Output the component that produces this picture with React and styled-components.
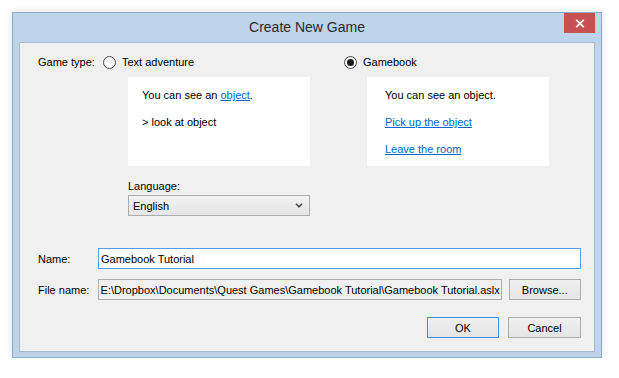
import React from "react";
import styled, { createGlobalStyle } from "styled-components";

const Global = createGlobalStyle`
  html, body { margin: 0; padding: 0; background: #ffffff; }
  body { font-family: "Liberation Sans", Arial, sans-serif; font-size: 11px; color: #000; }
  * { box-sizing: border-box; }
`;

const Page = styled.div`
  padding: 12px 0 0 12px;
`;

const Window = styled.div`
  width: 590px;
  height: 346px;
  border: 1px solid #8fabc7;
  background: #bdd4ea;
  display: flex;
  flex-direction: column;
  padding: 0 6px 5px 6px;
  box-shadow: 0 0 8px rgba(0, 0, 0, 0.12);
`;

const TitleBar = styled.div`
  height: 29px;
  display: grid;
  grid-template-columns: 1fr auto 1fr;
  align-items: start;
`;

const Title = styled.div`
  grid-column: 2;
  line-height: 29px;
  font-size: 14px;
  color: #2a2a2a;
`;

const CloseButton = styled.div`
  grid-column: 3;
  justify-self: end;
  width: 31px;
  height: 20px;
  background: #c75050;
  display: flex;
  align-items: center;
  justify-content: center;
`;

const Client = styled.div`
  flex: 1;
  border: 1px solid #a7b9cb;
  background: #f0f0f0;
  padding: 12px 13px 13px 18px;
  display: flex;
  flex-direction: column;
`;

const TopRow = styled.div`
  display: flex;
`;

const TypeLabel = styled.div`
  width: 65px;
  height: 14px;
  line-height: 14px;
`;

const OptionCol = styled.div`
  width: ${(p) => p.$width || "auto"};
  display: flex;
  flex-direction: column;
`;

const RadioRow = styled.div`
  display: flex;
  align-items: center;
  gap: 6px;
  height: 14px;
`;

const RadioCircle = styled.div`
  width: 13px;
  height: 13px;
  border-radius: 50%;
  border: 1px solid #4d4d4d;
  background: linear-gradient(#f4f4f4, #ffffff);
  display: flex;
  align-items: center;
  justify-content: center;
  &::after {
    content: "";
    display: ${(p) => (p.$checked ? "block" : "none")};
    width: 7px;
    height: 7px;
    border-radius: 50%;
    background: #1a1a1a;
  }
`;

const Preview = styled.div`
  margin-top: 8px;
  margin-left: ${(p) => p.$indent}px;
  width: 182px;
  height: 89px;
  background: #ffffff;
  padding: 11px ${(p) => p.$pad}px 0;
  display: flex;
  flex-direction: column;
  gap: 12px;
`;

const Line = styled.div`
  line-height: 15px;
  white-space: nowrap;
`;

const Link = styled.span`
  color: #0066cc;
  text-decoration: underline;
`;

const LanguageBlock = styled.div`
  margin-left: 25px;
  margin-top: 13px;
  display: flex;
  flex-direction: column;
  gap: 1px;
`;

const FieldLabel = styled.div`
  line-height: 15px;
`;

const Select = styled.div`
  width: 182px;
  height: 21px;
  border: 1px solid #acacac;
  background: linear-gradient(#f2f2f2, #e5e5e5);
  display: flex;
  align-items: center;
  justify-content: space-between;
  padding: 0 6px 0 4px;
`;

const FormRow = styled.div`
  display: flex;
  align-items: center;
  margin-top: ${(p) => p.$top}px;
`;

const Field = styled.div`
  height: 21px;
  width: ${(p) => (p.$width ? p.$width + "px" : "auto")};
  flex: ${(p) => (p.$width ? "none" : 1)};
  border: 1px solid ${(p) => (p.$focused ? "#569de5" : "#adadad")};
  background: ${(p) => (p.$readOnly ? "#f0f0f0" : "#ffffff")};
  padding: 0 2px;
  display: flex;
  align-items: center;
  white-space: nowrap;
  overflow: hidden;
`;

const Button = styled.div`
  width: ${(p) => p.$width}px;
  height: 21px;
  margin-left: ${(p) => p.$ml || 0}px;
  border: 1px solid ${(p) => (p.$default ? "#3c8fe0" : "#adadad")};
  background: linear-gradient(#f0f0f0, #e5e5e5);
  display: flex;
  align-items: center;
  justify-content: center;
`;

const ButtonRow = styled.div`
  display: flex;
  justify-content: flex-end;
  gap: 9px;
  margin-top: 17px;
`;

const NameLabel = styled.div`
  width: 60px;
`;

export default function App() {
  return (
    <>
      <Global />
      <Page>
        <Window>
          <TitleBar>
            <Title>Create New Game</Title>
            <CloseButton>
              <svg width="10" height="9" viewBox="0 0 10 9">
                <path d="M1.2 0.8 L8.8 8.2 M8.8 0.8 L1.2 8.2" stroke="#fff" strokeWidth="1.8" />
              </svg>
            </CloseButton>
          </TitleBar>
          <Client>
            <TopRow>
              <TypeLabel>Game type:</TypeLabel>
              <OptionCol $width="241px">
                <RadioRow>
                  <RadioCircle />
                  <span>Text adventure</span>
                </RadioRow>
                <Preview $indent={25} $pad={14}>
                  <Line>
                    You can see an <Link>object</Link>.
                  </Line>
                  <Line>&gt; look at object</Line>
                </Preview>
                <LanguageBlock>
                  <FieldLabel>Language:</FieldLabel>
                  <Select>
                    <span>English</span>
                    <svg width="8" height="5" viewBox="0 0 8 5">
                      <path d="M1 0.8 L4 3.8 L7 0.8" fill="none" stroke="#4a4a4a" strokeWidth="1.6" />
                    </svg>
                  </Select>
                </LanguageBlock>
              </OptionCol>
              <OptionCol>
                <RadioRow>
                  <RadioCircle $checked />
                  <span>Gamebook</span>
                </RadioRow>
                <Preview $indent={23} $pad={18}>
                  <Line>You can see an object.</Line>
                  <Line>
                    <Link>Pick up the object</Link>
                  </Line>
                  <Line>
                    <Link>Leave the room</Link>
                  </Line>
                </Preview>
              </OptionCol>
            </TopRow>
            <FormRow $top={32}>
              <NameLabel>Name:</NameLabel>
              <Field $focused>Gamebook Tutorial</Field>
            </FormRow>
            <FormRow $top={10}>
              <NameLabel>File name:</NameLabel>
              <Field $width={404} $readOnly>
                E:\Dropbox\Documents\Quest Games\Gamebook Tutorial\Gamebook Tutorial.aslx
              </Field>
              <Button $width={73} $ml={7}>Browse...</Button>
            </FormRow>
            <ButtonRow>
              <Button $width={72} $default>OK</Button>
              <Button $width={73}>Cancel</Button>
            </ButtonRow>
          </Client>
        </Window>
      </Page>
    </>
  );
}
